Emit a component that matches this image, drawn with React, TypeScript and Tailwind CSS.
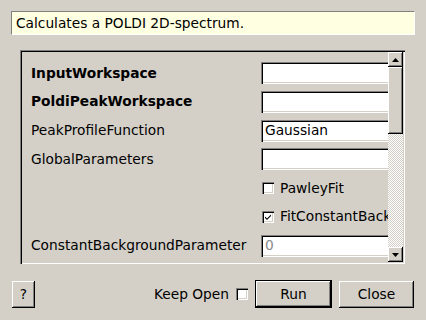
import React from "react";

const sunken =
  "shadow-[inset_1px_1px_0_#808080,inset_2px_2px_0_#000,inset_-1px_-1px_0_#fff,inset_-2px_-2px_0_#d4d0c8]";
const raised =
  "shadow-[inset_-1px_-1px_0_#000,inset_1px_1px_0_#fff,inset_-2px_-2px_0_#808080,inset_2px_2px_0_#d4d0c8]";

function TextBox({ value, muted }: { value?: string; muted?: boolean }) {
  return (
    <div
      className={`h-[22px] w-[150px] shrink-0 bg-white ${sunken} flex items-center pl-[4px] ${
        muted ? "text-[#8a8a8a]" : "text-black"
      }`}
    >
      {value}
    </div>
  );
}

function Check({ checked }: { checked?: boolean }) {
  return (
    <div className={`h-[12px] w-[12px] shrink-0 bg-white ${sunken} flex items-center justify-center`}>
      {checked && (
        <svg width="8" height="8" viewBox="0 0 8 8">
          <path d="M1 3.5 L3 5.5 L7 1.5 L7 3 L3 7 L1 5 Z" fill="#000" />
        </svg>
      )}
    </div>
  );
}

function Row({ label, bold, children }: { label?: string; bold?: boolean; children: React.ReactNode }) {
  return (
    <div className="flex h-[22px] items-center">
      <div className={`w-[230px] shrink-0 whitespace-nowrap ${bold ? "font-bold" : ""}`}>{label}</div>
      <div className="flex items-center">{children}</div>
    </div>
  );
}

function Arrow({ up }: { up?: boolean }) {
  return (
    <div className={`h-[15px] w-[15px] shrink-0 bg-[#d4d0c8] ${raised} flex items-center justify-center`}>
      <svg width="7" height="4" viewBox="0 0 7 4">
        <path d={up ? "M3.5 0 L7 4 L0 4 Z" : "M0 0 L7 0 L3.5 4 Z"} fill="#000" />
      </svg>
    </div>
  );
}

export default function App() {
  return (
    <div
      className="h-[320px] w-[426px] bg-[#d4d0c8] text-[13.75px] text-black flex flex-col"
      style={{ fontFamily: '"DejaVu Sans", sans-serif' }}
    >
      <div className="mx-[11px] mt-[11px] h-[24px] w-[404px] bg-[#ffffe1] border border-t-[#808080] border-l-[#808080] border-b-white border-r-white flex items-center pl-[4px]">
        Calculates a POLDI 2D-spectrum.
      </div>

      <div className={`ml-[20px] mt-[15px] h-[214px] w-[385px] flex p-[2px] ${sunken}`}>
        <div className="flex-1 overflow-hidden">
          <div className="flex flex-col gap-[6.75px] pl-[9px] pt-[10px]">
            <Row label="InputWorkspace" bold>
              <TextBox />
            </Row>
            <Row label="PoldiPeakWorkspace" bold>
              <TextBox />
            </Row>
            <Row label="PeakProfileFunction">
              <TextBox value="Gaussian" />
            </Row>
            <Row label="GlobalParameters">
              <TextBox />
            </Row>
            <Row>
              <div className="flex items-center gap-[6px] pl-[1px]">
                <Check />
                <span className="whitespace-nowrap">PawleyFit</span>
              </div>
            </Row>
            <Row>
              <div className="flex items-center gap-[6px] pl-[1px]">
                <Check checked />
                <span className="whitespace-nowrap">FitConstantBackground</span>
              </div>
            </Row>
            <Row label="ConstantBackgroundParameter">
              <TextBox value="0" muted />
            </Row>
          </div>
        </div>
        <div className="flex w-[15px] flex-col">
          <Arrow up />
          <div className={`h-[67px] bg-[#d4d0c8] ${raised}`} />
          <div className="flex-1 bg-[repeating-conic-gradient(#ffffff_0_25%,#d4d0c8_0_50%)] bg-[length:2px_2px]" />
          <Arrow />
        </div>
      </div>

      <div className="mt-[16px] flex items-center pl-[12px] pr-[12px]">
        <button className={`h-[27px] w-[23px] bg-[#d4d0c8] ${raised}`}>?</button>
        <div className="flex-1" />
        <span className="mr-[7px]">Keep Open</span>
        <Check />
        <button
          className={`ml-[7px] h-[28px] w-[77px] bg-[#d4d0c8] border border-black shadow-[inset_-1px_-1px_0_#000,inset_1px_1px_0_#fff,inset_-2px_-2px_0_#808080]`}
        >
          Run
        </button>
        <button className={`ml-[7px] h-[27px] w-[75px] bg-[#d4d0c8] ${raised}`}>Close</button>
      </div>
    </div>
  );
}
